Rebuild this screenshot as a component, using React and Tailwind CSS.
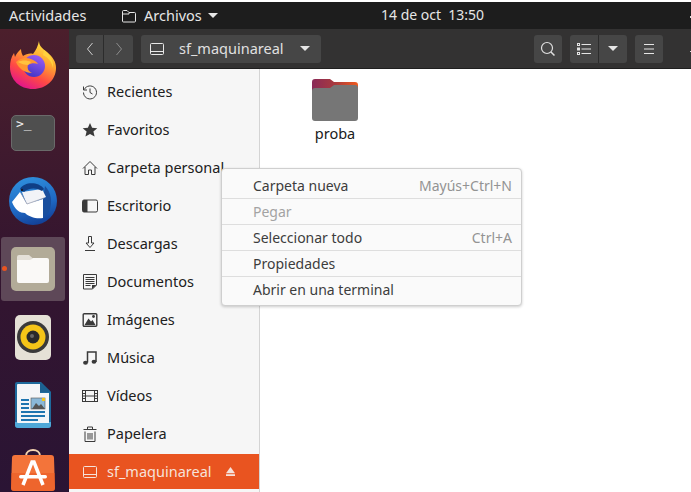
import React from "react";

const font = "font-['Noto_Sans','Open_Sans',sans-serif]";

function Icon({ children, className = "w-4 h-4" }) {
  return (
    <svg viewBox="0 0 16 16" fill="none" stroke="currentColor" strokeWidth="1" className={className}>
      {children}
    </svg>
  );
}

const DriveIcon = ({ className }) => (
  <Icon className={className}>
    <path d="M2.500 2.500h11a1 1 0 0 1 1 1v9a1 1 0 0 1-1 1h-11a1 1 0 0 1-1-1v-9a1 1 0 0 1 1-1z" />
    <path d="M1.500 10.500h13" />
  </Icon>
);

const sidebarItems = [
  {
    label: "Recientes",
    icon: (
      <Icon>
        <path d="M2.200 5.500A6.500 6.500 0 1 1 1.500 8.500" />
        <path d="M1.500 2.500v3.500h3.500" />
        <path d="M8 4.500V8.500l2.500 1.500" />
      </Icon>
    ),
  },
  {
    label: "Favoritos",
    icon: (
      <Icon>
        <path fill="currentColor" stroke="none" d="M8 1l2.100 4.700 5.200.5-3.900 3.400 1.200 5L8 12l-4.600 2.600 1.200-5L.7 6.200l5.200-.5z" />
      </Icon>
    ),
  },
  {
    label: "Carpeta personal",
    icon: (
      <Icon>
        <path d="M1 8.500L8 1.500l7 7" />
        <path d="M3 7v7.500h3.500V10h3v4.500H13V7" />
      </Icon>
    ),
  },
  {
    label: "Escritorio",
    icon: (
      <Icon>
        <rect x="0.500" y="2" width="15" height="12" rx="1.500" />
        <path fill="currentColor" stroke="none" d="M0.500 3.500A1.500 1.500 0 0 1 2 2h3.500v12H2A1.500 1.500 0 0 1 .5 12.500z" />
      </Icon>
    ),
  },
  {
    label: "Descargas",
    icon: (
      <Icon>
        <path d="M6.500 .5h3v6.500h2.500L8 11.500 4 7h2.500z" />
        <path d="M3 14.500h10" />
      </Icon>
    ),
  },
  {
    label: "Documentos",
    icon: (
      <Icon>
        <path d="M1.500 .5h13v10.500l-4 4h-9z" />
        <path d="M3.500 3.500h9M3.500 5.500h9M3.500 7.500h9M3.500 9.500h9M3.500 11.500h5" />
        <path fill="currentColor" stroke="none" d="M10 11h4.500L10 15z" />
      </Icon>
    ),
  },
  {
    label: "Imágenes",
    icon: (
      <Icon>
        <rect x="1.200" y="1.700" width="13.600" height="12.600" rx="1" strokeWidth="1.400" />
        <path fill="currentColor" stroke="none" d="M2.500 13l4-6.500 2.500 3 1.500-1.500L13.500 13z" />
        <circle cx="11.500" cy="4.500" r="1.400" fill="currentColor" stroke="none" />
      </Icon>
    ),
  },
  {
    label: "Música",
    icon: (
      <Icon>
        <path strokeWidth="1.500" d="M5.500 12.500V2h8.500v10" />
        <ellipse cx="3.500" cy="12.800" rx="2.400" ry="2" fill="currentColor" stroke="none" />
        <ellipse cx="12" cy="11.800" rx="2.400" ry="2" fill="currentColor" stroke="none" />
      </Icon>
    ),
  },
  {
    label: "Vídeos",
    icon: (
      <Icon>
        <rect x="0.500" y="2.500" width="15" height="11" strokeWidth="1" />
        <path d="M3.500 2.500v11M12.500 2.500v11M0.500 5.500h3M0.500 8h3M0.500 10.500h3M12.500 5.500h3M12.500 8h3M12.500 10.500h3M3.500 8h9" />
      </Icon>
    ),
  },
  {
    label: "Papelera",
    icon: (
      <Icon>
        <path d="M1.500 3.500h13M5.500 3.500V1h5v2.500" />
        <path d="M3 5.500v10h10v-10" />
        <path d="M6 7v6.500M8 7v6.500M10 7v6.500" />
      </Icon>
    ),
  },
];

const menuItems = [
  { label: "Carpeta nueva", hint: "Mayús+Ctrl+N" },
  { label: "Pegar", disabled: true },
  { label: "Seleccionar todo", hint: "Ctrl+A" },
  { label: "Propiedades" },
  { label: "Abrir en una terminal" },
];

function Firefox() {
  return (
    <svg viewBox="0 0 46 48" className="w-[46px] h-[48px]">
      <defs>
        <linearGradient id="ffOuter" x1="0.85" y1="0.05" x2="0.35" y2="1">
          <stop offset="0" stopColor="#ffe847" />
          <stop offset="0.35" stopColor="#ffa930" />
          <stop offset="0.7" stopColor="#ff4a44" />
          <stop offset="1" stopColor="#e3168a" />
        </linearGradient>
        <linearGradient id="ffGlobe" x1="0.7" y1="0" x2="0.3" y2="1">
          <stop offset="0" stopColor="#9a5cf5" />
          <stop offset="1" stopColor="#3f35c4" />
        </linearGradient>
      </defs>
      <path fill="url(#ffOuter)" d="M29 0c0 5 4 8 8 11 6 5 9 10 9 16 0 12-10 21-23 21C10 48 0 39 0 26c0-5 1-10 4-14l1 4c1-3 3-5 6-8 0 3 1 5 2 7 3-2 7-3 10-2 3-4 5-8 6-13z" />
      <path fill="#ffd23e" d="M34 9c6 4 10 11 9 18-1-6-5-11-10-13z" />
      <circle cx="24" cy="25" r="11" fill="url(#ffGlobe)" />
      <path fill="#ff9630" d="M6 21c4-4 10-5 15-3 3 1 6 3 7 5-3-1-7-1-10 1-1 3 0 6 4 8-7 0-13-4-16-11z" />
      <path fill="#ffc23e" d="M8 21c4-2 9-2 13 0l-3 3c-3 0-7-1-10-3z" />
    </svg>
  );
}

function Terminal() {
  return (
    <div className="w-11 h-9 rounded-[5px] bg-[#4f4f4f] border border-[#6a6a6a] px-[4px] text-[#eeeeee] text-[13px] leading-[15px] font-['DejaVu_Sans_Mono',monospace]">
      &gt;_
    </div>
  );
}

function Thunderbird() {
  return (
    <svg viewBox="0 0 48 50" className="w-12 h-[50px]">
      <defs>
        <linearGradient id="tbBlue" x1="0.3" y1="0" x2="0.6" y2="1">
          <stop offset="0" stopColor="#2f8fdc" />
          <stop offset="0.6" stopColor="#1f69c4" />
          <stop offset="1" stopColor="#123f96" />
        </linearGradient>
      </defs>
      <circle cx="24" cy="25" r="24" fill="url(#tbBlue)" />
      <path fill="#1a4f9e" d="M36 10c6 6 8 16 4 26l-6 6V23z" />
      <path fill="#f2f3f7" d="M13 16l20-3 4 8-19 8z" />
      <path fill="#0f3f86" d="M11 13c4-7 18-8 24 0l-2 2c-6-4-14-3-18 1z" />
      <path fill="#ffffff" d="M3 26l8-10 7 12 16-5v19c-7 1-14-1-18-5-5 0-10-3-13-11z" />
      <path stroke="#8e94a8" strokeWidth="0.700" fill="none" d="M12 17l6 11 17-6" />
      <circle cx="13" cy="14" r="1.200" fill="#1b1b2b" />
    </svg>
  );
}

function Files() {
  return (
    <div className="w-11 h-11 rounded-[5px] bg-[#b2ab98] flex flex-col items-center justify-center">
      <svg viewBox="0 0 32 28" className="w-8 h-7">
        <path fill="#faf9f7" d="M2 3h28a2 2 0 0 1 2 2v21a2 2 0 0 1-2 2H2a2 2 0 0 1-2-2V5a2 2 0 0 1 2-2z" />
        <path fill="#e4e0d8" d="M2 0h10l4 3.500-3 1.500H0V2a2 2 0 0 1 2-2z" />
      </svg>
    </div>
  );
}

function Rhythmbox() {
  return (
    <div className="w-9 h-[45px] rounded-[5px] bg-[#e5e1d6] flex items-center justify-center">
      <svg viewBox="0 0 32 32" className="w-8 h-8">
        <circle cx="16" cy="16" r="16" fill="#3a3a3a" />
        <circle cx="16" cy="16" r="12.500" fill="#f5c518" />
        <circle cx="16" cy="16" r="6.500" fill="#2a2a2a" />
        <circle cx="15" cy="15" r="2" fill="#666" />
      </svg>
    </div>
  );
}

function Writer() {
  return (
    <svg viewBox="0 0 36 46" className="w-9 h-[46px]">
      <path fill="#1e6a9c" d="M2 0h24l10 10v33a3 3 0 0 1-3 3H3a3 3 0 0 1-3-3V2a2 2 0 0 1 2-2z" />
      <path fill="#4fa8d8" d="M0 40h36v3a3 3 0 0 1-3 3H3a3 3 0 0 1-3-3z" />
      <path fill="#f4f6f8" d="M3 2h22v9h9v30H3a1 1 0 0 1-1-1V3a1 1 0 0 1 1-1z" />
      <path fill="#1c5f8f" d="M25 0l11 10H25z" opacity="0.9" />
      <rect x="6" y="17" width="8" height="2" fill="#1e75b0" />
      <rect x="6" y="21" width="8" height="2" fill="#1e75b0" />
      <rect x="6" y="25" width="8" height="2" fill="#1e75b0" />
      <rect x="6" y="29" width="24" height="2" fill="#1e75b0" />
      <rect x="6" y="33" width="24" height="2" fill="#1e75b0" />
      <rect x="6" y="37" width="17" height="2" fill="#1e75b0" />
      <rect x="16" y="16" width="14" height="11" fill="#8ab8d8" stroke="#555" strokeWidth="0.600" />
      <path fill="#555" d="M17 27l4-6 3 3 2-2 4 5z" />
      <rect x="27" y="16" width="3" height="3" fill="#f0c419" />
    </svg>
  );
}

function Software() {
  return (
    <svg viewBox="0 0 44 42" className="w-11 h-[42px]">
      <path fill="none" stroke="#f5d4b0" strokeWidth="2" d="M15 7c0-8 14-8 14 0" />
      <path fill="#f3743a" d="M4 6h36a3 3 0 0 1 3 3l1 30a3 3 0 0 1-3 3H3a3 3 0 0 1-3-3L1 9a3 3 0 0 1 3-3z" />
      <path fill="#e9561f" d="M0 24h44v15a3 3 0 0 1-3 3H3a3 3 0 0 1-3-3z" opacity="0.5" />
      <path fill="none" stroke="#fff" strokeWidth="3.500" d="M12 36l9-23h2l9 23" />
      <rect x="8" y="26" width="28" height="3.500" rx="1.700" fill="#fff" />
    </svg>
  );
}

export default function App() {
  return (
    <div className={`w-[691px] h-[492px] overflow-hidden relative bg-white flex flex-col ${font}`}>
      <div className="h-0.5 bg-white" />

      {/* top bar */}
      <div className="h-[27px] bg-[#1d1d1d] text-[#e6e6e6] text-[14.500px] flex items-center relative shrink-0">
        <span className="ml-[9px] w-[112px]">Actividades</span>
        <svg viewBox="0 0 16 16" fill="none" stroke="currentColor" className="w-4 h-4">
          <path d="M1.500 13V3.500a1 1 0 0 1 1-1h3.500l2 2h5.500a1 1 0 0 1 1 1V13a1 1 0 0 1-1 1h-11a1 1 0 0 1-1-1z" />
          <path d="M8 4.500v1.500H1.500" />
        </svg>
        <span className="ml-[7px]">Archivos</span>
        <span className="ml-[6px] w-0 h-0 border-x-[5px] border-x-transparent border-t-[5px] border-t-[#e6e6e6]" />
        <span className="absolute left-[381px] top-[2px] text-[14px]">14 de oct&nbsp;&nbsp;13:50</span>
        <span className="absolute left-[690px] top-[14px] w-px h-[2px] bg-[#d8d8d8]" />
      </div>

      <div className="flex flex-1 min-h-0">
        {/* dock */}
        <div className="w-[69px] shrink-0 bg-gradient-to-b from-[#4c1f2c] via-[#34152f] to-[#2a1434] pt-0.5 pl-px">
          <div className="h-[68px] w-16 flex items-center justify-center"><Firefox /></div>
          <div className="h-[68px] w-16 flex items-center justify-center"><Terminal /></div>
          <div className="h-[68px] w-16 flex items-center justify-center"><Thunderbird /></div>
          <div className="h-[68px] flex items-center">
            <div className="w-16 h-16 rounded-[3px] bg-[#5e4858] flex items-center justify-center relative">
              <Files />
              <span className="absolute left-[1px] top-[29px] w-[5px] h-[5px] rounded-full bg-[#e95420]" />
            </div>
          </div>
          <div className="h-[68px] w-16 flex items-center justify-center"><Rhythmbox /></div>
          <div className="h-[68px] w-16 flex items-center justify-center"><Writer /></div>
          <div className="h-[62px] w-16 flex items-center justify-center"><Software /></div>
        </div>

        <div className="flex-1 flex flex-col min-w-0">
          {/* header */}
          <div className="h-10 shrink-0 bg-[#333232] border-b border-[#1f1f1f] flex items-center pl-[7px] text-[#e0e0e0] relative">
            <div className="flex h-7 w-[57px] rounded-[3px] bg-[#464646]">
              <div className="w-7 flex items-center justify-center border-r border-[#2c2c2c]">
                <svg viewBox="0 0 8 14" fill="none" stroke="#cfcfcf" className="w-2 h-3.5"><path d="M6.500 1L1.500 7l5 6" /></svg>
              </div>
              <div className="flex-1 flex items-center justify-center">
                <svg viewBox="0 0 8 14" fill="none" stroke="#8c8c8c" className="w-2 h-3.5"><path d="M1.500 1l5 6-5 6" /></svg>
              </div>
            </div>
            <div className="ml-2 w-[180px] h-7 rounded-[3px] bg-[#464646] flex items-center pl-2 text-[14.500px]">
              <DriveIcon className="w-4 h-4 text-[#e8e8e8]" />
              <span className="ml-[14px] flex-1">sf_maquinareal</span>
              <span className="mr-[11px] w-0 h-0 border-x-[5px] border-x-transparent border-t-[5px] border-t-[#e6e6e6]" />
            </div>
            <div className="ml-[213px] w-7 h-7 rounded-[3px] bg-[#464646] flex items-center justify-center">
              <svg viewBox="0 0 16 16" fill="none" stroke="#e0e0e0" className="w-4 h-4">
                <circle cx="7" cy="7" r="5.500" strokeWidth="1.200" />
                <path d="M11 11l3.500 3.500" strokeWidth="1.500" />
              </svg>
            </div>
            <div className="ml-2 flex h-7 w-[57px] rounded-[3px] bg-[#464646]">
              <div className="w-[29px] flex items-center justify-center border-r border-[#2c2c2c]">
                <svg viewBox="0 0 14 12" fill="none" stroke="#e4e4e4" className="w-3.5 h-3">
                  <path d="M4.500 1.500H14M4.500 6H14M4.500 10.500H14" />
                  <rect x="0.500" y="0.500" width="2" height="2" />
                  <rect x="0.500" y="5" width="2" height="2" />
                  <rect x="0.500" y="9.500" width="2" height="2" />
                </svg>
              </div>
              <div className="flex-1 flex items-center justify-center">
                <span className="w-0 h-0 border-x-[5px] border-x-transparent border-t-[5px] border-t-[#e6e6e6]" />
              </div>
            </div>
            <div className="ml-2 w-7 h-7 rounded-[3px] bg-[#464646] flex items-center justify-center">
              <svg viewBox="0 0 12 12" fill="none" stroke="#e4e4e4" className="w-3 h-3"><path d="M1 1.500h10M1 6h10M1 10.500h10" /></svg>
            </div>
            <span className="absolute left-[621px] top-[22px] w-px h-px bg-[#d8d8d8]" />
          </div>

          <div className="flex-1 flex min-h-0">
            {/* sidebar */}
            <div className="w-[191px] shrink-0 bg-[#f6f6f6] border-r border-[#d4d4d4] pt-1 text-[14.500px] text-[#202020]">
              {sidebarItems.map((item) => (
                <div key={item.label} className="h-[38px] flex items-center pl-[13px]">
                  <span className="text-[#3a3a3a]">{item.icon}</span>
                  <span className="ml-[9px] whitespace-nowrap">{item.label}</span>
                </div>
              ))}
              <div className="mt-px h-[35px] bg-[#e95420] text-[#f6e2da] flex items-center pl-[13px]">
                <DriveIcon className="w-4 h-4" />
                <span className="ml-[9px] flex-1">sf_maquinareal</span>
                <svg viewBox="0 0 10 10" className="w-[9px] h-[9px] mr-[24px]" fill="currentColor">
                  <path d="M5 0l5 7H0z" />
                  <rect y="8" width="10" height="2" />
                </svg>
              </div>
            </div>

            {/* file area */}
            <div className="flex-1 bg-white pt-[10px] pl-[52px]">
              <div className="w-[46px] flex flex-col items-center">
                <svg viewBox="0 0 46 42" className="w-[46px] h-[42px]">
                  <defs>
                    <linearGradient id="folderTop" x1="0" y1="0" x2="1" y2="0">
                      <stop offset="0" stopColor="#8a2a58" />
                      <stop offset="0.5" stopColor="#a83a3e" />
                      <stop offset="1" stopColor="#ef5a1e" />
                    </linearGradient>
                  </defs>
                  <path fill="url(#folderTop)" d="M3 0h15l4 3h21a3 3 0 0 1 3 3v12H0V3a3 3 0 0 1 3-3z" />
                  <path fill="#767676" d="M3 9h15l4-3h21a3 3 0 0 1 3 3v30a3 3 0 0 1-3 3H3a3 3 0 0 1-3-3V12a3 3 0 0 1 3-3z" />
                </svg>
                <span className="mt-0.5 text-[14.500px] text-[#202020]">proba</span>
              </div>
            </div>
          </div>
        </div>
      </div>

      {/* context menu */}
      <div className="absolute left-[221px] top-[168px] w-[301px] h-[138px] bg-[#fafafa] border border-[#cfcfcf] rounded-[4px] shadow-[0_1px_3px_rgba(0,0,0,0.2)] pt-1 text-[14px] text-[#3d3d3d]">
        {menuItems.map((item, i) => (
          <div
            key={item.label}
            className={`h-[26px] flex items-center justify-between pl-[31px] pr-[9px] border-b ${i < 4 ? "border-[#dedede]" : "border-transparent"}`}
          >
            <span className={item.disabled ? "text-[#a3a3a3]" : ""}>{item.label}</span>
            {item.hint && <span className="text-[#939393]">{item.hint}</span>}
          </div>
        ))}
      </div>
    </div>
  );
}
